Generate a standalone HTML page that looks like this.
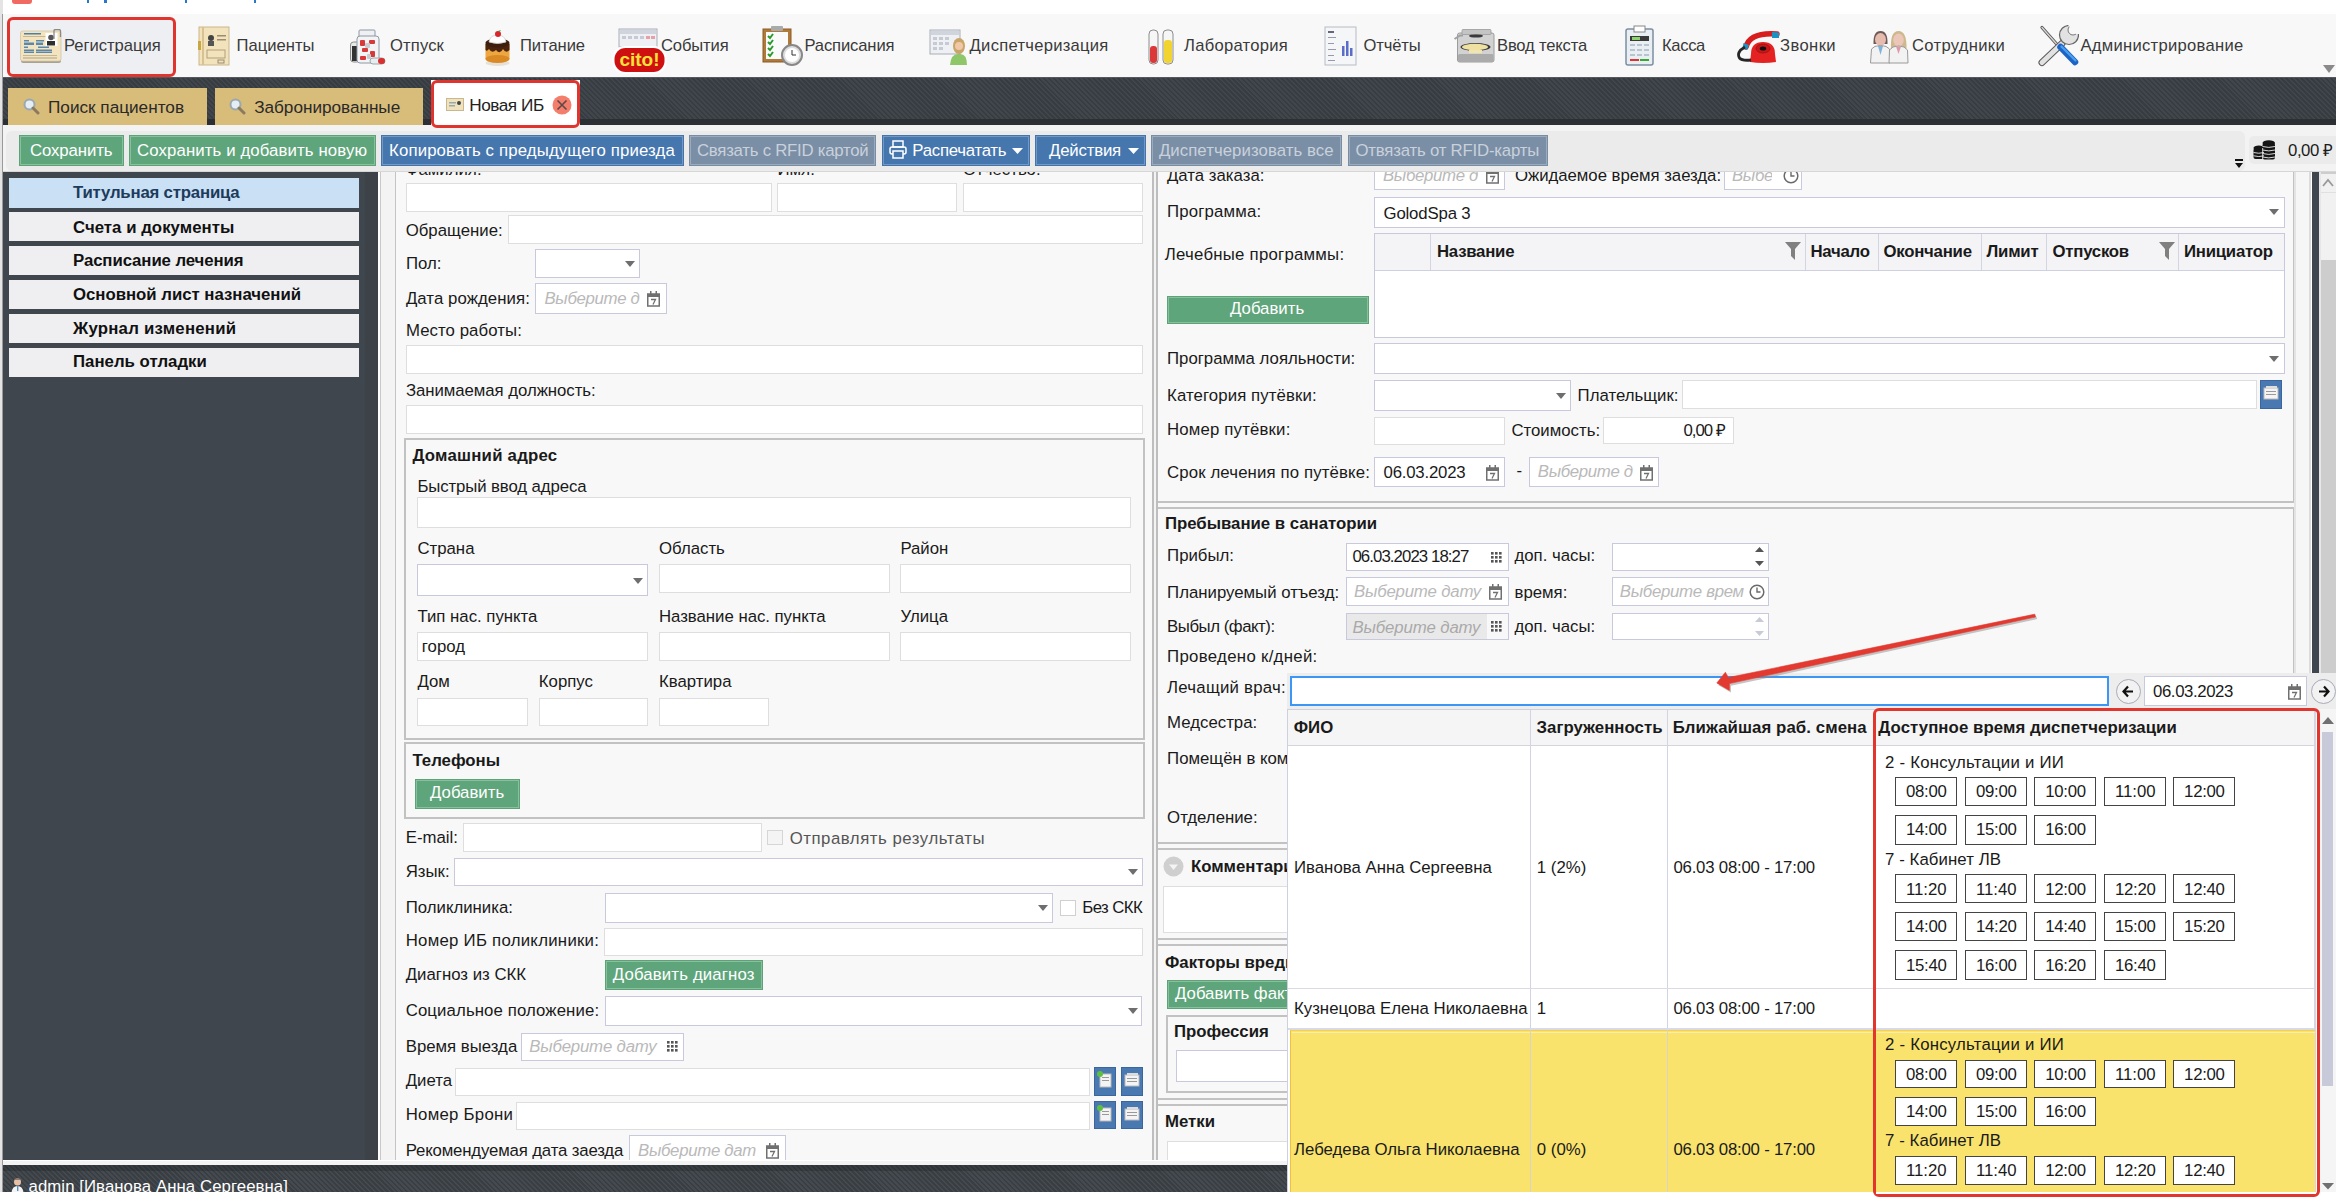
<!DOCTYPE html>
<html><head><meta charset="utf-8"><title>UI</title>
<style>
html,body{margin:0;padding:0;}
body{width:2336px;height:1197px;overflow:hidden;position:relative;background:#fff;font-family:"Liberation Sans", sans-serif;}
body div,body svg{position:absolute;box-sizing:border-box;}
.t{white-space:nowrap;}

.inp{background:#fff;border:1px solid #dedede;}
.dd{background:#fff;border:1px solid #c8c9dd;}
.dis{background:#e9e9e9;border:1px solid #c8c9dd;}
.gb{background:#5fa57b;border:1px solid #5ea27a;box-shadow:inset 0 0 0 1px #88c09c;}
.bb{background:#4676ae;border:1px solid #4474ab;box-shadow:inset 0 0 0 1px #7398c4;}
.xb{background:#7a8ea6;border:1px solid #788ca4;box-shadow:inset 0 0 0 1px #9aabbe;}
.dark{background:repeating-linear-gradient(45deg,#3f444a 0px,#3f444a 2.5px,#373b40 2.5px,#373b40 5px);}
.sec{border:2px solid #c2c2c2;}
.tbtn{background:#fff;border:1.2px solid #444;}
.arr{width:0;height:0;border-left:5px solid transparent;border-right:5px solid transparent;border-top:6px solid #707070;}

</style></head><body>
<div style="left:0px;top:0px;width:2336px;height:1197px;background:#f8f8f8;"></div>
<div style="left:0px;top:0px;width:3px;height:1197px;background:#e4e4e4;"></div>
<div style="left:2px;top:14px;width:1px;height:1178px;background:#9a9a9a;"></div>
<div style="left:3px;top:0px;width:2333px;height:14px;background:#ffffff;"></div>
<div style="left:12px;top:0px;width:20px;height:4px;background:#f16a62;border-radius:0 0 3px 3px;"></div>
<div style="left:87px;top:0px;width:1.5px;height:3px;background:#2a78c8;"></div>
<div style="left:104px;top:0px;width:2.5px;height:3px;background:#2a78c8;"></div>
<div style="left:185px;top:0px;width:1.5px;height:3px;background:#2a78c8;"></div>
<div style="left:254px;top:0px;width:2px;height:3px;background:#2a78c8;"></div>
<div style="left:3px;top:14px;width:2333px;height:63px;background:#f8f8f8;"></div>
<div style="left:7px;top:17px;width:169px;height:60px;background:#eeeff2;border:3px solid #e0352e;border-radius:6px;"></div>
<div class="t" style="left:64px;top:37.7px;font-size:16.6px;line-height:16.6px;color:#3a3a3a;letter-spacing:-0.029px;">Регистрация</div>
<div class="t" style="left:236.5px;top:37.7px;font-size:16.6px;line-height:16.6px;color:#3a3a3a;letter-spacing:0.018px;">Пациенты</div>
<div class="t" style="left:390px;top:37.7px;font-size:16.6px;line-height:16.6px;color:#3a3a3a;letter-spacing:0.138px;">Отпуск</div>
<div class="t" style="left:520px;top:37.7px;font-size:16.6px;line-height:16.6px;color:#3a3a3a;letter-spacing:-0.071px;">Питание</div>
<div class="t" style="left:661px;top:37.7px;font-size:16.6px;line-height:16.6px;color:#3a3a3a;letter-spacing:-0.143px;">События</div>
<div class="t" style="left:804.4px;top:37.7px;font-size:16.6px;line-height:16.6px;color:#3a3a3a;letter-spacing:-0.125px;">Расписания</div>
<div class="t" style="left:969.6px;top:37.7px;font-size:16.6px;line-height:16.6px;color:#3a3a3a;letter-spacing:0.264px;">Диспетчеризация</div>
<div class="t" style="left:1184px;top:37.7px;font-size:16.6px;line-height:16.6px;color:#3a3a3a;letter-spacing:0.266px;">Лаборатория</div>
<div class="t" style="left:1363.5px;top:37.7px;font-size:16.6px;line-height:16.6px;color:#3a3a3a;letter-spacing:-0.154px;">Отчёты</div>
<div class="t" style="left:1497px;top:37.7px;font-size:16.6px;line-height:16.6px;color:#3a3a3a;letter-spacing:-0.172px;">Ввод текста</div>
<div class="t" style="left:1662px;top:37.7px;font-size:16.6px;line-height:16.6px;color:#3a3a3a;letter-spacing:-0.344px;">Касса</div>
<div class="t" style="left:1780px;top:37.7px;font-size:16.6px;line-height:16.6px;color:#3a3a3a;letter-spacing:0.404px;">Звонки</div>
<div class="t" style="left:1912px;top:37.7px;font-size:16.6px;line-height:16.6px;color:#3a3a3a;letter-spacing:0.311px;">Сотрудники</div>
<div class="t" style="left:2080.5px;top:37.7px;font-size:16.6px;line-height:16.6px;color:#3a3a3a;letter-spacing:0.280px;">Администрирование</div>
<svg style="left:20px;top:29px" width="43" height="35" viewBox="0 0 43 35"><rect x="1" y="3" width="40" height="31" rx="2" fill="#a9a293"/><rect x="0.5" y="2" width="40.5" height="30" rx="2" fill="#f3e3bf" stroke="#d3c6a6" stroke-width="0.8"/><rect x="4" y="4" width="17" height="1.5" fill="#4a7fa8"/><rect x="3" y="7" width="27" height="1" fill="#c8b88e"/><g fill="#5a88ad"><rect x="4" y="11" width="5" height="1.5"/><rect x="16" y="11" width="8" height="1.5"/><rect x="4" y="13.5" width="10" height="2.5"/><rect x="16" y="13.5" width="7" height="2.5"/><rect x="4" y="17.5" width="4" height="1.5"/><rect x="18" y="17.5" width="11" height="1.5"/><rect x="4" y="20.5" width="10" height="1.5"/><rect x="16" y="20.5" width="16" height="1.5"/><rect x="4" y="22.5" width="10" height="1.5"/><rect x="16" y="22.5" width="16" height="1.5"/></g><rect x="3" y="26" width="34" height="1" fill="#c6b893"/><rect x="3" y="28" width="34" height="2" fill="#cfc3a4"/><rect x="25.5" y="4" width="12" height="13" fill="#ffffff"/><circle cx="31" cy="8.5" r="2.8" fill="#555"/><rect x="27" y="12" width="8" height="4.5" fill="#2e2e2e"/><path d="M34 10 L34 1.5 Q34 0.5 36 0.5 L39 0.5 Q40.5 0.5 40.5 2 L40.5 8" stroke="#8a8a8a" stroke-width="1.3" fill="none"/></svg>
<svg style="left:198px;top:26px" width="32" height="40" viewBox="0 0 32 40"><rect x="1" y="1" width="30" height="38" fill="#f2e3bd" stroke="#cbb58a"/><rect x="4" y="1" width="2" height="38" fill="#d9c291"/><circle cx="13" cy="12" r="3" fill="#444"/><rect x="10" y="15" width="6" height="5" fill="#555"/><rect x="19" y="9" width="9" height="1.5" fill="#9c8c70"/><rect x="19" y="13" width="9" height="1.5" fill="#9c8c70"/><rect x="9" y="24" width="18" height="8" fill="none" stroke="#b3a07a"/><rect x="20" y="34" width="6" height="3" fill="none" stroke="#9c8c70"/><rect x="0" y="15" width="3" height="9" fill="#c9a640"/></svg>
<svg style="left:349px;top:29px" width="37" height="37" viewBox="0 0 37 37"><rect x="1.5" y="13" width="9" height="20" rx="3" fill="#e8e8e8" stroke="#8a8a8a"/><rect x="3" y="17" width="5" height="15" fill="#333"/><rect x="10" y="1" width="16" height="7" rx="1" fill="#eef0f3" stroke="#8f98a4"/><rect x="8" y="7" width="22" height="27" rx="3" fill="#f2f4f6" stroke="#8f98a4"/><g fill="#d63a3a"><rect x="11" y="11" width="5" height="6" rx="1"/><rect x="20" y="11" width="6" height="4" rx="1"/><rect x="13" y="19" width="6" height="4" rx="1"/><rect x="21" y="22" width="5" height="6" rx="1"/><rect x="11" y="27" width="6" height="4" rx="1"/></g><g fill="#c8cdd2"><rect x="16" y="14" width="5" height="5" rx="1"/><rect x="18" y="25" width="4" height="5" rx="1"/></g><rect x="21" y="29" width="15" height="6" rx="3" fill="#e9ecef" stroke="#9aa"/><rect x="29" y="29" width="7" height="6" rx="3" fill="#d83030"/></svg>
<svg style="left:484px;top:30px" width="27" height="37" viewBox="0 0 27 37"><ellipse cx="13.5" cy="33" rx="12" ry="3" fill="#e0d6c8" opacity="0.7"/><rect x="1.5" y="14" width="24" height="15" fill="#eea640"/><ellipse cx="13.5" cy="29" rx="12" ry="4" fill="#d98a25"/><path d="M1.5 14 L25.5 14 L25.5 20 Q22 24 19 19 Q16 25 12 20 Q8 24 5 19 Q3 22 1.5 20Z" fill="#4a2410"/><ellipse cx="13.5" cy="13" rx="12" ry="4.5" fill="#3e1f0d"/><path d="M5 12 Q6 5 13.5 5 Q21 5 22 12 Q13.5 15 5 12Z" fill="#ffffff" stroke="#cfcfcf" stroke-width="0.8"/><circle cx="14" cy="4" r="3" fill="#d9262c"/><path d="M14 1 L17 0 L15.5 2Z" fill="#3a9a3a"/></svg>
<svg style="left:612px;top:28px" width="55" height="47" viewBox="0 0 55 47"><rect x="7" y="1" width="38" height="18" fill="#eef0f4" stroke="#a8adb5"/><rect x="8" y="2" width="36" height="4" fill="#d0d4dc"/><g fill="#c5cad4"><rect x="10" y="8" width="4" height="3"/><rect x="16" y="8" width="4" height="3"/><rect x="22" y="8" width="4" height="3"/><rect x="28" y="8" width="4" height="3"/></g><g fill="#e8a0a8"><rect x="34" y="8" width="4" height="3"/><rect x="39" y="8" width="4" height="3"/></g><rect x="0.5" y="18" width="54" height="28" rx="12" fill="#fff"/><rect x="2.5" y="20" width="50" height="24" rx="11" fill="#cf1010"/><text x="27.5" y="38" text-anchor="middle" font-family="Liberation Sans" font-weight="bold" font-size="19" fill="#ffe23a">cito!</text></svg>
<svg style="left:762px;top:25px" width="41" height="42" viewBox="0 0 41 42"><rect x="1" y="4" width="28" height="33" fill="#b07a3a" stroke="#8a5a24"/><rect x="4" y="7" width="22" height="27" fill="#fafafa"/><rect x="9" y="1" width="12" height="5" rx="1" fill="#aaa"/><g stroke="#2a9a2a" stroke-width="2" fill="none"><path d="M6 11 l2 2 l3 -4"/><path d="M6 17 l2 2 l3 -4"/><path d="M6 23 l2 2 l3 -4"/><path d="M6 29 l2 2 l3 -4"/></g><circle cx="30" cy="30" r="10" fill="#ddd" stroke="#888" stroke-width="2"/><circle cx="30" cy="30" r="7" fill="#fff"/><path d="M30 25 v5 h4" stroke="#333" fill="none"/></svg>
<svg style="left:929px;top:29px" width="39" height="37" viewBox="0 0 39 37"><rect x="1" y="1" width="30" height="24" fill="#eef0f4" stroke="#a8adb5"/><rect x="2" y="2" width="28" height="4" fill="#d0d4dc"/><g fill="#c5cad4"><rect x="4" y="8" width="4" height="3"/><rect x="10" y="8" width="4" height="3"/><rect x="16" y="8" width="4" height="3"/><rect x="4" y="13" width="4" height="3"/><rect x="10" y="13" width="4" height="3"/><rect x="16" y="13" width="4" height="3"/><rect x="4" y="18" width="4" height="3"/><rect x="10" y="18" width="4" height="3"/></g><ellipse cx="30" cy="17" rx="6" ry="8" fill="#c9a56a"/><circle cx="30" cy="17" r="4" fill="#f0c8a8"/><path d="M21 36 Q22 24 30 25 Q38 24 38 36Z" fill="#8fc66a"/></svg>
<svg style="left:1148px;top:29px" width="27" height="36" viewBox="0 0 27 36"><rect x="1" y="1" width="9" height="34" rx="4" fill="#f6f6f6" stroke="#8c8c8c"/><rect x="2" y="17" width="7" height="17" rx="3" fill="#dd3838"/><rect x="15" y="1" width="10" height="34" rx="4" fill="#f6f6f6" stroke="#8c8c8c"/><rect x="16" y="11" width="8" height="23" rx="3" fill="#f2d430"/></svg>
<svg style="left:1324px;top:26px" width="33" height="40" viewBox="0 0 33 40"><rect x="1" y="1" width="31" height="38" fill="#f4f6f8" stroke="#b6bcc4"/><rect x="4" y="5" width="6" height="2" fill="#667"/><g fill="#99a"><rect x="4" y="11" width="8" height="1"/><rect x="4" y="17" width="6" height="1"/><rect x="4" y="23" width="8" height="1"/><rect x="4" y="29" width="6" height="1"/><rect x="4" y="34" width="7" height="1"/></g><g fill="#5a6ec8"><rect x="18" y="20" width="2.5" height="10"/><rect x="22" y="15" width="2.5" height="15"/><rect x="26" y="22" width="2.5" height="8"/></g></svg>
<svg style="left:1454px;top:29px" width="41" height="34" viewBox="0 0 41 34"><rect x="3.5" y="4" width="36.5" height="29" rx="2" fill="#d2d2d2" stroke="#9c9c9c"/><rect x="4" y="25" width="35.5" height="8" rx="1.5" fill="#ababab"/><rect x="8" y="0.5" width="29" height="5" rx="1" fill="#c4c4c4" stroke="#9a9a9a" stroke-width="0.8"/><ellipse cx="22" cy="7" rx="7" ry="1.6" fill="#3a3a3a"/><path d="M0.5 10 L6 6.5 L9 6.5" stroke="#a0a0a0" stroke-width="2" fill="none"/><ellipse cx="21.5" cy="18" rx="15" ry="4" fill="#3c3c3c"/><ellipse cx="21" cy="18" rx="13" ry="3.2" fill="#efe1a2"/><rect x="15" y="21" width="13" height="3.2" fill="#f1e4ae"/></svg>
<svg style="left:1625px;top:25px" width="29" height="41" viewBox="0 0 29 41"><rect x="1" y="4" width="27" height="36" rx="2" fill="#e9eef3" stroke="#7b8ea2" stroke-width="1.5"/><rect x="9" y="1" width="11" height="6" fill="#fff" stroke="#888"/><rect x="5" y="11" width="19" height="5" fill="#3a3a3a"/><rect x="7" y="12" width="8" height="3" fill="#8bd46a"/><g fill="#b8c4d0"><rect x="5" y="19" width="5" height="2"/><rect x="12" y="19" width="5" height="2"/><rect x="19" y="19" width="5" height="2"/><rect x="5" y="24" width="5" height="2"/><rect x="12" y="24" width="5" height="2"/><rect x="19" y="24" width="5" height="2"/><rect x="5" y="29" width="5" height="2"/><rect x="12" y="29" width="5" height="2"/><rect x="19" y="29" width="5" height="2"/></g><rect x="5" y="34" width="9" height="2" fill="#d33"/><rect x="15" y="34" width="9" height="2" fill="#3a3"/></svg>
<svg style="left:1737px;top:29px" width="43" height="35" viewBox="0 0 43 35"><path d="M9 18 Q13 3 40 5" stroke="#d71d1d" stroke-width="5.5" fill="none" stroke-linecap="round"/><path d="M35 3 L42 3.5 L42 9 L35 9Z" fill="#1a93c4"/><path d="M6.5 14 L12 16 L10 21 L5.5 19Z" fill="#1a93c4"/><path d="M14 25 Q14 13 26 13 Q38 13 38 25 L39 33 Q26 35 13 33Z" fill="#e52222"/><ellipse cx="26" cy="19.5" rx="7" ry="4.5" fill="#c51818" stroke="#a01010" stroke-width="0.8"/><ellipse cx="26" cy="19.5" rx="3.2" ry="2" fill="#111"/><path d="M8 18 Q-1 23 2.5 29 Q5 32 14 31" stroke="#262626" stroke-width="2.8" fill="none"/></svg>
<svg style="left:1870px;top:30px" width="39" height="34" viewBox="0 0 39 34"><path d="M3.5 14 Q3 1 10.5 1 Q18 1 17.5 14 Z" fill="#6d5b58"/><ellipse cx="10.5" cy="9.5" rx="5.5" ry="6.5" fill="#e6bcae"/><path d="M0.5 33 L1.5 19 Q4 15.5 10.5 15.5 Q17 15.5 19.5 19 L20 33Z" fill="#f2f2f2" stroke="#9a9a9a"/><path d="M8 16 L10.5 25 L13 16Z" fill="#7fb2d6"/><path d="M21 19 Q20 1 28.5 1 Q37 1 36.5 19 Z" fill="#cdb98c"/><ellipse cx="28.5" cy="10" rx="5.3" ry="6.5" fill="#ecc6b8"/><path d="M19 33 L19.5 20 Q22 16 28.5 16 Q35 16 37.5 20 L38 33Z" fill="#f2f2f2" stroke="#9a9a9a"/><path d="M26 16.5 L28.5 24 L31 16.5Z" fill="#dc9aaa"/></svg>
<svg style="left:2037px;top:25px" width="42" height="42" viewBox="0 0 42 42"><path d="M5 2.5 L20.5 20" stroke="#555" stroke-width="3.2" stroke-linecap="round"/><path d="M5 2.5 L20.5 20" stroke="#d6d6d6" stroke-width="1.4" stroke-linecap="round"/><path d="M25 18.5 L5 37.5" stroke="#5a5a5a" stroke-width="7" stroke-linecap="round"/><path d="M25 18.5 L5 37.5" stroke="#e2e2e2" stroke-width="5" stroke-linecap="round"/><circle cx="32" cy="10" r="9.5" fill="#e2e2e2" stroke="#666" stroke-width="1.2"/><circle cx="36" cy="5" r="5" fill="#f8f8f8" stroke="#777" stroke-width="1"/><path d="M31 0 L43 0 L43 9 L39 9Z" fill="#f8f8f8"/><path d="M23.5 22 L38 37" stroke="#1d64c4" stroke-width="6.5" stroke-linecap="round"/><path d="M24.5 21.5 L38.5 35.5" stroke="#4aa0f0" stroke-width="2.2" stroke-linecap="round"/></svg>
<svg style="left:2322px;top:64px" width="14" height="10"><path d="M1 1 L13 1 L7 9Z" fill="#8a8a8a"/></svg>
<div style="left:3px;top:77px;width:2333px;height:48px;background:repeating-linear-gradient(45deg,#41464c 0px,#41464c 1.6px,#373c41 1.8px,#373c41 3.5px);"></div>
<div style="left:3px;top:77px;width:2333px;height:1px;background:#55595e;"></div>
<div style="left:3px;top:118.5px;width:2333px;height:6.5px;background:#2c3034;"></div>
<div style="left:8px;top:88px;width:199px;height:37px;background:#d8bc79;"></div>
<div style="left:215px;top:88px;width:208px;height:37px;background:#d8bc79;"></div>
<div style="left:431px;top:80px;width:149px;height:45px;background:#ffffff;"></div>
<svg style="left:23px;top:98px" width="17" height="17" viewBox="0 0 17 17"><circle cx="6.5" cy="6.5" r="5" fill="#e4eef4" stroke="#9aa8b0" stroke-width="2"/><path d="M10 10 L15 15" stroke="#8a7a60" stroke-width="3" stroke-linecap="round"/></svg>
<svg style="left:229px;top:98px" width="17" height="17" viewBox="0 0 17 17"><circle cx="6.5" cy="6.5" r="5" fill="#e4eef4" stroke="#9aa8b0" stroke-width="2"/><path d="M10 10 L15 15" stroke="#8a7a60" stroke-width="3" stroke-linecap="round"/></svg>
<div class="t" style="left:48px;top:98.97px;font-size:17.2px;line-height:17.2px;color:#2a2a2a;letter-spacing:-0.009px;">Поиск пациентов</div>
<div class="t" style="left:254.2px;top:98.77px;font-size:17.2px;line-height:17.2px;color:#2a2a2a;letter-spacing:-0.034px;">Забронированные</div>
<svg style="left:446px;top:98px" width="18" height="13" viewBox="0 0 18 13"><rect x="0.5" y="0.5" width="17" height="12" fill="#efe2bd" stroke="#c9b88e"/><rect x="3" y="4" width="7" height="1.5" fill="#9aa"/><rect x="3" y="7" width="6" height="1.5" fill="#9aa"/><circle cx="13" cy="5" r="2" fill="#444"/></svg>
<div class="t" style="left:469.2px;top:97.27px;font-size:17.2px;line-height:17.2px;color:#222;letter-spacing:-0.448px;">Новая ИБ</div>
<svg style="left:552px;top:95px" width="20" height="20" viewBox="0 0 20 20"><circle cx="10" cy="10" r="9.5" fill="#f47d6b"/><path d="M5.5 5.5 L14.5 14.5 M14.5 5.5 L5.5 14.5" stroke="#5a4a48" stroke-width="1.6"/></svg>
<div style="left:3px;top:125px;width:2333px;height:47px;background:#f3f3f3;"></div>
<div style="left:6px;top:131px;width:2239px;height:40px;background:#ebebeb;border-radius:6px;"></div>
<div style="left:3px;top:171px;width:2333px;height:1px;background:#d6d6d6;"></div>
<div class="gb" style="left:19px;top:135px;width:105px;height:31px;"></div>
<div class="t" style="left:30px;top:142.89px;font-size:16.8px;line-height:16.8px;color:#ffffff;letter-spacing:-0.099px;">Сохранить</div>
<div class="gb" style="left:129px;top:135px;width:247px;height:31px;"></div>
<div class="t" style="left:137.1px;top:142.89px;font-size:16.8px;line-height:16.8px;color:#ffffff;letter-spacing:0.105px;">Сохранить и добавить новую</div>
<div class="bb" style="left:381px;top:135px;width:303px;height:31px;"></div>
<div class="t" style="left:389px;top:142.89px;font-size:16.8px;line-height:16.8px;color:#ffffff;letter-spacing:0.144px;">Копировать с предыдущего приезда</div>
<div class="xb" style="left:689px;top:135px;width:187px;height:31px;"></div>
<div class="t" style="left:697px;top:142.89px;font-size:16.8px;line-height:16.8px;color:#c9d1db;letter-spacing:-0.251px;">Связать с RFID картой</div>
<div class="bb" style="left:882px;top:135px;width:148px;height:31px;"></div>
<div class="t" style="left:912.3px;top:142.89px;font-size:16.8px;line-height:16.8px;color:#ffffff;letter-spacing:-0.257px;">Распечатать</div>
<div class="bb" style="left:1035px;top:135px;width:111px;height:31px;"></div>
<div class="t" style="left:1049px;top:142.89px;font-size:16.8px;line-height:16.8px;color:#ffffff;letter-spacing:-0.191px;">Действия</div>
<div class="xb" style="left:1151px;top:135px;width:191px;height:31px;"></div>
<div class="t" style="left:1158.9px;top:142.89px;font-size:16.8px;line-height:16.8px;color:#c9d1db;letter-spacing:0.058px;">Диспетчеризовать все</div>
<div class="xb" style="left:1348px;top:135px;width:200px;height:31px;"></div>
<div class="t" style="left:1355.5px;top:142.89px;font-size:16.8px;line-height:16.8px;color:#c9d1db;letter-spacing:-0.210px;">Отвязать от RFID-карты</div>
<svg style="left:889px;top:140px" width="18" height="20" viewBox="0 0 18 20"><rect x="4" y="1" width="10" height="6" fill="none" stroke="#fff" stroke-width="1.5"/><rect x="1" y="7" width="16" height="7" rx="2" fill="none" stroke="#fff" stroke-width="1.5"/><rect x="4" y="11" width="10" height="7" fill="#4676ae" stroke="#fff" stroke-width="1.5"/></svg>
<svg style="left:1012px;top:148px" width="11" height="6"><path d="M0 0 L11 0 L5.5 6Z" fill="#fff"/></svg>
<svg style="left:1127.5px;top:148px" width="11" height="6"><path d="M0 0 L11 0 L5.5 6Z" fill="#fff"/></svg>
<svg style="left:2234px;top:159px" width="10" height="10"><rect x="1" y="0" width="8" height="2" fill="#111"/><path d="M1 4 L9 4 L5 9Z" fill="#111"/></svg>
<div style="left:2249px;top:136px;width:87px;height:28px;background:#ebebeb;border-radius:5px 0 0 5px;"></div>
<svg style="left:2253px;top:140px" width="23" height="21" viewBox="0 0 23 21"><g fill="#151515"><rect x="0.5" y="8" width="10.5" height="11" rx="2"/><ellipse cx="5.75" cy="8" rx="5.25" ry="2.6"/><rect x="9.5" y="3" width="12.5" height="16.5" rx="2"/><ellipse cx="15.75" cy="3" rx="6.25" ry="2.8"/></g><g stroke="#ebebeb" stroke-width="0.9" fill="none"><path d="M0.5 12.5 Q5.75 14 11 12.5 M0.5 15.8 Q5.75 17.3 11 15.8 M9.5 6.5 Q15.75 8.3 22 6.5 M9.5 10 Q15.75 11.8 22 10 M9.5 13.5 Q15.75 15.3 22 13.5 M9.5 17 Q15.75 18.8 22 17"/><path d="M9.7 8 V19"/></g></svg>
<div class="t" style="left:2288px;top:142.99px;font-size:16.8px;line-height:16.8px;color:#1a1a1a;letter-spacing:-0.438px;">0,00 ₽</div>
<div style="left:431px;top:80px;width:149px;height:48px;border:3px solid #e0352e;border-radius:6px;"></div>
<div style="left:3px;top:172px;width:375px;height:988px;background:#40464d;"></div>
<div style="left:365px;top:172px;width:13px;height:988px;background:#3d4248;"></div>
<div style="left:9px;top:178px;width:350px;height:30px;background:#c9e0f5;"></div>
<div class="t" style="left:73px;top:184.99px;font-size:16.8px;line-height:16.8px;color:#1d3b5a;font-weight:700;letter-spacing:-0.196px;">Титульная страница</div>
<div style="left:9px;top:212px;width:350px;height:29px;background:#efeff1;"></div>
<div class="t" style="left:73px;top:219.69px;font-size:16.8px;line-height:16.8px;color:#111111;font-weight:700;letter-spacing:0.030px;">Счета и документы</div>
<div style="left:9px;top:246px;width:350px;height:29px;background:#efeff1;"></div>
<div class="t" style="left:73px;top:253.09px;font-size:16.8px;line-height:16.8px;color:#111111;font-weight:700;letter-spacing:-0.089px;">Расписание лечения</div>
<div style="left:9px;top:280px;width:350px;height:29px;background:#efeff1;"></div>
<div class="t" style="left:73px;top:286.99px;font-size:16.8px;line-height:16.8px;color:#111111;font-weight:700;letter-spacing:-0.023px;">Основной лист назначений</div>
<div style="left:9px;top:313.5px;width:350px;height:29px;background:#efeff1;"></div>
<div class="t" style="left:73px;top:320.59px;font-size:16.8px;line-height:16.8px;color:#111111;font-weight:700;letter-spacing:0.235px;">Журнал изменений</div>
<div style="left:9px;top:347.5px;width:350px;height:29px;background:#efeff1;"></div>
<div class="t" style="left:73px;top:354.49px;font-size:16.8px;line-height:16.8px;color:#111111;font-weight:700;letter-spacing:0.007px;">Панель отладки</div>
<div style="left:378px;top:172px;width:778px;height:988px;background:#f8f8f8;"></div>
<div style="left:378px;top:172px;width:2px;height:988px;background:#ffffff;"></div>
<div style="left:380px;top:172px;width:1px;height:988px;background:#c8c8c8;"></div>
<div style="left:381px;top:172px;width:14px;height:988px;background:#f3f3f3;"></div>
<div style="left:395px;top:172px;width:1px;height:988px;background:#c4c4c4;"></div>
<div style="left:1152px;top:172px;width:2px;height:988px;background:#bdbdbd;"></div>
<div style="left:1154px;top:172px;width:2px;height:988px;background:#f3f3f3;"></div>
<div style="left:1156px;top:172px;width:2px;height:988px;background:#bdbdbd;"></div>
<div style="left:0;top:0;width:2336px;height:1197px;clip-path:inset(172px 1184px 37px 396px);">
<div class="t" style="left:405.7px;top:161.99px;font-size:16.8px;line-height:16.8px;color:#1a1a1a;">Фамилия:</div>
<div class="t" style="left:777.5px;top:161.99px;font-size:16.8px;line-height:16.8px;color:#1a1a1a;">Имя:</div>
<div class="t" style="left:963px;top:161.99px;font-size:16.8px;line-height:16.8px;color:#1a1a1a;">Отчество:</div>
<div class="inp" style="left:406px;top:183px;width:366px;height:29px;"></div>
<div class="inp" style="left:777px;top:183px;width:180px;height:29px;"></div>
<div class="inp" style="left:963px;top:183px;width:180px;height:29px;"></div>
<div class="t" style="left:405.7px;top:222.79px;font-size:16.8px;line-height:16.8px;color:#1a1a1a;letter-spacing:0.008px;">Обращение:</div>
<div class="inp" style="left:508px;top:215px;width:635px;height:29px;"></div>
<div class="t" style="left:405.9px;top:255.89px;font-size:16.8px;line-height:16.8px;color:#1a1a1a;">Пол:</div>
<div class="dd" style="left:535px;top:249px;width:105px;height:29px;"></div>
<svg style="left:625px;top:261px" width="10" height="6"><path d="M0 0 L10 0 L5 6Z" fill="#6e6e6e"/></svg>
<div class="t" style="left:405.9px;top:290.99px;font-size:16.8px;line-height:16.8px;color:#1a1a1a;letter-spacing:0.068px;">Дата рождения:</div>
<div class="dd" style="left:535px;top:283px;width:132px;height:31px;"></div>
<div class="t" style="left:544.5px;top:291.49px;font-size:16.8px;line-height:16.8px;color:#b9b9b9;font-style:italic;letter-spacing:-0.323px;">Выберите д</div>
<svg style="left:647px;top:291px" width="13" height="16" viewBox="0 0 13 16"><rect x="0.75" y="3" width="11.5" height="12" fill="none" stroke="#707070" stroke-width="1.5"/><rect x="0.75" y="3" width="11.5" height="3" fill="#707070"/><rect x="3" y="0" width="1.5" height="4" fill="#707070"/><rect x="8.5" y="0" width="1.5" height="4" fill="#707070"/><path d="M4 8.5 H8.5 L6 13.5" stroke="#707070" stroke-width="1.3" fill="none"/></svg>
<div class="t" style="left:405.9px;top:322.69px;font-size:16.8px;line-height:16.8px;color:#1a1a1a;letter-spacing:0.073px;">Место работы:</div>
<div class="inp" style="left:406px;top:345px;width:737px;height:29px;"></div>
<div class="t" style="left:405.9px;top:382.79px;font-size:16.8px;line-height:16.8px;color:#1a1a1a;letter-spacing:-0.052px;">Занимаемая должность:</div>
<div class="inp" style="left:406px;top:405px;width:737px;height:29px;"></div>
<div class="sec" style="left:404px;top:438px;width:741px;height:302px;"></div>
<div class="t" style="left:412.4px;top:447.99px;font-size:16.8px;line-height:16.8px;color:#1a1a1a;font-weight:700;letter-spacing:0.227px;">Домашний адрес</div>
<div class="t" style="left:417.4px;top:478.69px;font-size:16.8px;line-height:16.8px;color:#1a1a1a;letter-spacing:-0.113px;">Быстрый ввод адреса</div>
<div class="inp" style="left:417px;top:497px;width:714px;height:31px;"></div>
<div class="t" style="left:417.4px;top:540.99px;font-size:16.8px;line-height:16.8px;color:#1a1a1a;">Страна</div>
<div class="t" style="left:659px;top:540.99px;font-size:16.8px;line-height:16.8px;color:#1a1a1a;">Область</div>
<div class="t" style="left:900.4px;top:540.99px;font-size:16.8px;line-height:16.8px;color:#1a1a1a;">Район</div>
<div class="dd" style="left:417px;top:564px;width:231px;height:32px;"></div>
<svg style="left:633px;top:577.5px" width="10" height="6"><path d="M0 0 L10 0 L5 6Z" fill="#6e6e6e"/></svg>
<div class="inp" style="left:659px;top:564px;width:231px;height:29px;"></div>
<div class="inp" style="left:900px;top:564px;width:231px;height:29px;"></div>
<div class="t" style="left:417.4px;top:608.79px;font-size:16.8px;line-height:16.8px;color:#1a1a1a;">Тип нас. пункта</div>
<div class="t" style="left:659px;top:608.79px;font-size:16.8px;line-height:16.8px;color:#1a1a1a;letter-spacing:-0.029px;">Название нас. пункта</div>
<div class="t" style="left:900.4px;top:608.79px;font-size:16.8px;line-height:16.8px;color:#1a1a1a;">Улица</div>
<div class="inp" style="left:417px;top:632px;width:231px;height:29px;"></div>
<div class="inp" style="left:659px;top:632px;width:231px;height:29px;"></div>
<div class="inp" style="left:900px;top:632px;width:231px;height:29px;"></div>
<div class="t" style="left:421.8px;top:638.99px;font-size:16.8px;line-height:16.8px;color:#1a1a1a;">город</div>
<div class="t" style="left:417.4px;top:673.99px;font-size:16.8px;line-height:16.8px;color:#1a1a1a;">Дом</div>
<div class="t" style="left:538.8px;top:673.99px;font-size:16.8px;line-height:16.8px;color:#1a1a1a;">Корпус</div>
<div class="t" style="left:659px;top:673.99px;font-size:16.8px;line-height:16.8px;color:#1a1a1a;">Квартира</div>
<div class="inp" style="left:417px;top:698px;width:111px;height:28px;"></div>
<div class="inp" style="left:538.5px;top:698px;width:109.5px;height:28px;"></div>
<div class="inp" style="left:659px;top:698px;width:110px;height:28px;"></div>
<div class="sec" style="left:404px;top:742px;width:741px;height:77px;"></div>
<div class="t" style="left:412.4px;top:753.39px;font-size:16.8px;line-height:16.8px;color:#1a1a1a;font-weight:700;">Телефоны</div>
<div class="gb" style="left:415px;top:779px;width:105px;height:30px;"></div>
<div class="t" style="left:430px;top:785.49px;font-size:16.8px;line-height:16.8px;color:#fff;">Добавить</div>
<div class="t" style="left:405.7px;top:830.29px;font-size:16.8px;line-height:16.8px;color:#1a1a1a;">E-mail:</div>
<div class="inp" style="left:462.5px;top:823px;width:299.5px;height:29px;"></div>
<div style="left:767px;top:830px;width:16px;height:15px;background:#f4f4f4;border:1px solid #d6d6d6;"></div>
<div class="t" style="left:789.7px;top:830.99px;font-size:16.8px;line-height:16.8px;color:#555555;letter-spacing:0.526px;">Отправлять результаты</div>
<div class="t" style="left:405.7px;top:863.59px;font-size:16.8px;line-height:16.8px;color:#1a1a1a;">Язык:</div>
<div class="dd" style="left:453.5px;top:858px;width:689.0px;height:27.5px;"></div>
<svg style="left:1127.5px;top:869px" width="10" height="6"><path d="M0 0 L10 0 L5 6Z" fill="#6e6e6e"/></svg>
<div class="t" style="left:405.7px;top:899.99px;font-size:16.8px;line-height:16.8px;color:#1a1a1a;">Поликлиника:</div>
<div class="dd" style="left:605.4px;top:893px;width:447.6px;height:30px;"></div>
<svg style="left:1037.8px;top:905px" width="10" height="6"><path d="M0 0 L10 0 L5 6Z" fill="#6e6e6e"/></svg>
<div style="left:1059.5px;top:899.5px;width:16px;height:16.5px;background:#fff;border:1px solid #d0d0d0;"></div>
<div class="t" style="left:1082.2px;top:899.99px;font-size:16.8px;line-height:16.8px;color:#1a1a1a;letter-spacing:-0.574px;">Без СКК</div>
<div class="t" style="left:405.7px;top:933.39px;font-size:16.8px;line-height:16.8px;color:#1a1a1a;letter-spacing:0.262px;">Номер ИБ поликлиники:</div>
<div class="inp" style="left:603.7px;top:927.5px;width:539.3px;height:28.0px;"></div>
<div class="t" style="left:405.7px;top:966.79px;font-size:16.8px;line-height:16.8px;color:#1a1a1a;">Диагноз из СКК</div>
<div class="gb" style="left:605.4px;top:960.3px;width:157.6px;height:29.5px;"></div>
<div class="t" style="left:612.7px;top:967.29px;font-size:16.8px;line-height:16.8px;color:#fff;letter-spacing:0.152px;">Добавить диагноз</div>
<div class="t" style="left:405.7px;top:1003.49px;font-size:16.8px;line-height:16.8px;color:#1a1a1a;letter-spacing:0.106px;">Социальное положение:</div>
<div class="dd" style="left:605.4px;top:996.3px;width:537.1px;height:30.200000000000045px;"></div>
<svg style="left:1127.5px;top:1008px" width="10" height="6"><path d="M0 0 L10 0 L5 6Z" fill="#6e6e6e"/></svg>
<div class="t" style="left:405.7px;top:1038.99px;font-size:16.8px;line-height:16.8px;color:#1a1a1a;">Время выезда</div>
<div class="dd" style="left:521.2px;top:1033px;width:163.29999999999995px;height:27.5px;"></div>
<div class="t" style="left:529.2px;top:1039.49px;font-size:16.8px;line-height:16.8px;color:#b9b9b9;font-style:italic;letter-spacing:-0.175px;">Выберите дату</div>
<svg style="left:666.5px;top:1041px" width="11" height="11" viewBox="0 0 11 11"><rect x="0" y="0" width="2.6" height="2.6" fill="#555"/><rect x="0" y="4" width="2.6" height="2.6" fill="#555"/><rect x="0" y="8" width="2.6" height="2.6" fill="#555"/><rect x="4" y="0" width="2.6" height="2.6" fill="#555"/><rect x="4" y="4" width="2.6" height="2.6" fill="#555"/><rect x="4" y="8" width="2.6" height="2.6" fill="#555"/><rect x="8" y="0" width="2.6" height="2.6" fill="#555"/><rect x="8" y="4" width="2.6" height="2.6" fill="#555"/><rect x="8" y="8" width="2.6" height="2.6" fill="#555"/></svg>
<div class="t" style="left:405.7px;top:1072.99px;font-size:16.8px;line-height:16.8px;color:#1a1a1a;">Диета</div>
<div class="inp" style="left:455px;top:1068px;width:635px;height:27.5px;"></div>
<div class="t" style="left:405.7px;top:1107.49px;font-size:16.8px;line-height:16.8px;color:#1a1a1a;letter-spacing:0.260px;">Номер Брони</div>
<div class="inp" style="left:516px;top:1101.5px;width:574px;height:28.0px;"></div>
<div style="left:1094px;top:1067px;width:21.59999999999991px;height:28.5px;background:#4a78b0;border:1px solid #3a66a0;"></div>
<svg style="left:1094px;top:1067px" width="21.59999999999991" height="28.5" viewBox="0 0 21.59999999999991 28.5"><rect x="6" y="7" width="11" height="13" fill="#f4f4f4" stroke="#bbb"/><rect x="8" y="10" width="7" height="1" fill="#999"/><rect x="8" y="13" width="7" height="1" fill="#999"/><circle cx="6" cy="7" r="3" fill="#5fc040"/></svg>
<div style="left:1121.2px;top:1067px;width:21.799999999999955px;height:28.5px;background:#4a78b0;border:1px solid #3a66a0;"></div>
<svg style="left:1121.2px;top:1067px" width="21.799999999999955" height="28.5" viewBox="0 0 21.799999999999955 28.5"><rect x="4" y="8" width="14" height="11" fill="#f4f4f4" stroke="#bbb"/><rect x="6" y="11" width="10" height="1" fill="#999"/><rect x="6" y="14" width="10" height="1" fill="#999"/><rect x="6" y="6" width="11" height="2" fill="#ddd"/></svg>
<div style="left:1094px;top:1101.2px;width:21.59999999999991px;height:28.299999999999955px;background:#4a78b0;border:1px solid #3a66a0;"></div>
<svg style="left:1094px;top:1101.2px" width="21.59999999999991" height="28.299999999999955" viewBox="0 0 21.59999999999991 28.299999999999955"><rect x="6" y="7" width="11" height="13" fill="#f4f4f4" stroke="#bbb"/><rect x="8" y="10" width="7" height="1" fill="#999"/><rect x="8" y="13" width="7" height="1" fill="#999"/><circle cx="6" cy="7" r="3" fill="#5fc040"/></svg>
<div style="left:1121.2px;top:1101.2px;width:21.799999999999955px;height:28.299999999999955px;background:#4a78b0;border:1px solid #3a66a0;"></div>
<svg style="left:1121.2px;top:1101.2px" width="21.799999999999955" height="28.299999999999955" viewBox="0 0 21.799999999999955 28.299999999999955"><rect x="4" y="8" width="14" height="11" fill="#f4f4f4" stroke="#bbb"/><rect x="6" y="11" width="10" height="1" fill="#999"/><rect x="6" y="14" width="10" height="1" fill="#999"/><rect x="6" y="6" width="11" height="2" fill="#ddd"/></svg>
<div class="t" style="left:405.7px;top:1143.09px;font-size:16.8px;line-height:16.8px;color:#1a1a1a;letter-spacing:-0.158px;">Рекомендуемая дата заезда</div>
<div class="dd" style="left:629.4px;top:1135px;width:156.89999999999998px;height:30px;"></div>
<div class="t" style="left:638px;top:1143.49px;font-size:16.8px;line-height:16.8px;color:#b9b9b9;font-style:italic;letter-spacing:-0.296px;">Выберите дат</div>
<svg style="left:766px;top:1143px" width="13" height="16" viewBox="0 0 13 16"><rect x="0.75" y="3" width="11.5" height="12" fill="none" stroke="#707070" stroke-width="1.5"/><rect x="0.75" y="3" width="11.5" height="3" fill="#707070"/><rect x="3" y="0" width="1.5" height="4" fill="#707070"/><rect x="8.5" y="0" width="1.5" height="4" fill="#707070"/><path d="M4 8.5 H8.5 L6 13.5" stroke="#707070" stroke-width="1.3" fill="none"/></svg>
</div>
<div style="left:1158px;top:172px;width:1136px;height:988px;background:#f8f8f8;"></div>
<div style="left:2294px;top:172px;width:1.5px;height:988px;background:#e4e4e4;"></div>
<div style="left:2295.5px;top:172px;width:14px;height:988px;background:#f6f6f6;"></div>
<div style="left:2309px;top:172px;width:1.5px;height:988px;background:#dcdcdc;"></div>
<div style="left:2310.5px;top:172px;width:1.5px;height:988px;background:#ffffff;"></div>
<div style="left:2312px;top:172px;width:7px;height:988px;background:#40464d;"></div>
<div style="left:2319px;top:172px;width:17px;height:988px;background:#cdcdcd;"></div>
<div style="left:2319px;top:172px;width:1.5px;height:988px;background:#e6e6e6;"></div>
<div style="left:2320.5px;top:174px;width:15.5px;height:86px;background:#f1f1f1;"></div>
<div style="left:2320.5px;top:192px;width:15.5px;height:1px;background:#e0e0e0;"></div>
<svg style="left:2322px;top:178px" width="12" height="10"><path d="M1 8 L6 2 L11 8" stroke="#9a9a9a" stroke-width="1.8" fill="none"/></svg>
<div style="left:0;top:0;width:2336px;height:1197px;clip-path:inset(172px 42px 37px 1158px);">
<div class="sec" style="left:1156px;top:150px;width:1139px;height:353px;"></div>
<div class="t" style="left:1167px;top:168.49px;font-size:16.8px;line-height:16.8px;color:#1a1a1a;">Дата заказа:</div>
<div class="dd" style="left:1374.4px;top:160px;width:130.5999999999999px;height:30px;"></div>
<div class="t" style="left:1383px;top:167.99px;font-size:16.8px;line-height:16.8px;color:#b9b9b9;font-style:italic;letter-spacing:-0.323px;">Выберите д</div>
<svg style="left:1486px;top:168px" width="13" height="16" viewBox="0 0 13 16"><rect x="0.75" y="3" width="11.5" height="12" fill="none" stroke="#707070" stroke-width="1.5"/><rect x="0.75" y="3" width="11.5" height="3" fill="#707070"/><rect x="3" y="0" width="1.5" height="4" fill="#707070"/><rect x="8.5" y="0" width="1.5" height="4" fill="#707070"/><path d="M4 8.5 H8.5 L6 13.5" stroke="#707070" stroke-width="1.3" fill="none"/></svg>
<div class="t" style="left:1515px;top:168.49px;font-size:16.8px;line-height:16.8px;color:#1a1a1a;letter-spacing:-0.041px;">Ожидаемое время заезда:</div>
<div class="dd" style="left:1724.4px;top:160px;width:78.09999999999991px;height:30px;"></div>
<div class="t" style="left:1732px;top:167.99px;font-size:16.8px;line-height:16.8px;color:#b9b9b9;font-style:italic;letter-spacing:-0.331px;">Выбер</div>
<div style="left:1772px;top:165px;width:20px;height:22px;background:#fff;"></div>
<svg style="left:1782.5px;top:168px" width="16" height="16" viewBox="0 0 16 16"><circle cx="8" cy="8" r="6.8" fill="none" stroke="#6a6a6a" stroke-width="1.5"/><path d="M8 3.5 V8 H11.5" stroke="#6a6a6a" stroke-width="1.4" fill="none"/></svg>
<div class="t" style="left:1167px;top:204.29px;font-size:16.8px;line-height:16.8px;color:#1a1a1a;letter-spacing:0.171px;">Программа:</div>
<div class="dd" style="left:1374.4px;top:197px;width:910.5999999999999px;height:31px;"></div>
<svg style="left:2269px;top:209px" width="10" height="6"><path d="M0 0 L10 0 L5 6Z" fill="#6e6e6e"/></svg>
<div class="t" style="left:1383.5px;top:205.99px;font-size:16.8px;line-height:16.8px;color:#1a1a1a;letter-spacing:-0.164px;">GolodSpa 3</div>
<div class="t" style="left:1164.8px;top:246.99px;font-size:16.8px;line-height:16.8px;color:#1a1a1a;letter-spacing:0.239px;">Лечебные программы:</div>
<div style="left:1374.4px;top:233.3px;width:910.6px;height:104.5px;background:#fff;border:1px solid #c8c9dd;"></div>
<div style="left:1375.4px;top:234.3px;width:908.6px;height:37px;background:#f4f4f6;border-bottom:1px solid #d0d1e0;"></div>
<div style="left:1430.4px;top:234.3px;width:1px;height:36px;background:#d4d5e2;"></div>
<div style="left:1804.5px;top:234.3px;width:1px;height:36px;background:#d4d5e2;"></div>
<div style="left:1877.5px;top:234.3px;width:1px;height:36px;background:#d4d5e2;"></div>
<div style="left:1980.6px;top:234.3px;width:1px;height:36px;background:#d4d5e2;"></div>
<div style="left:2046.3px;top:234.3px;width:1px;height:36px;background:#d4d5e2;"></div>
<div style="left:2177.5px;top:234.3px;width:1px;height:36px;background:#d4d5e2;"></div>
<div class="t" style="left:1437px;top:244.19px;font-size:16.8px;line-height:16.8px;color:#1a1a1a;font-weight:700;letter-spacing:-0.25px;">Название</div>
<div class="t" style="left:1810.5px;top:244.19px;font-size:16.8px;line-height:16.8px;color:#1a1a1a;font-weight:700;letter-spacing:-0.25px;">Начало</div>
<div class="t" style="left:1883.5px;top:244.19px;font-size:16.8px;line-height:16.8px;color:#1a1a1a;font-weight:700;letter-spacing:-0.25px;">Окончание</div>
<div class="t" style="left:1986.6px;top:244.19px;font-size:16.8px;line-height:16.8px;color:#1a1a1a;font-weight:700;letter-spacing:-0.25px;">Лимит</div>
<div class="t" style="left:2052.5px;top:244.19px;font-size:16.8px;line-height:16.8px;color:#1a1a1a;font-weight:700;letter-spacing:-0.25px;">Отпусков</div>
<div class="t" style="left:2184px;top:244.19px;font-size:16.8px;line-height:16.8px;color:#1a1a1a;font-weight:700;letter-spacing:-0.25px;">Инициатор</div>
<svg style="left:1785px;top:242.4px" width="16" height="19" viewBox="0 0 16 19"><path d="M0 0 H16 L10 7 V18 L6 14 V7 Z" fill="#808080"/></svg>
<svg style="left:2159px;top:242.4px" width="16" height="19" viewBox="0 0 16 19"><path d="M0 0 H16 L10 7 V18 L6 14 V7 Z" fill="#808080"/></svg>
<div class="gb" style="left:1167px;top:295.5px;width:201.75px;height:28.5px;"></div>
<div class="t" style="left:1230px;top:301.49px;font-size:16.8px;line-height:16.8px;color:#fff;">Добавить</div>
<div class="t" style="left:1167px;top:350.99px;font-size:16.8px;line-height:16.8px;color:#1a1a1a;">Программа лояльности:</div>
<div class="dd" style="left:1374.4px;top:343.2px;width:910.5999999999999px;height:31.30000000000001px;"></div>
<svg style="left:2269px;top:356px" width="10" height="6"><path d="M0 0 L10 0 L5 6Z" fill="#6e6e6e"/></svg>
<div class="t" style="left:1167px;top:387.99px;font-size:16.8px;line-height:16.8px;color:#1a1a1a;letter-spacing:0.100px;">Категория путёвки:</div>
<div class="dd" style="left:1374.4px;top:380.2px;width:196.89999999999986px;height:31.19999999999999px;"></div>
<svg style="left:1555.5px;top:393px" width="10" height="6"><path d="M0 0 L10 0 L5 6Z" fill="#6e6e6e"/></svg>
<div class="t" style="left:1577.6px;top:387.99px;font-size:16.8px;line-height:16.8px;color:#1a1a1a;">Плательщик:</div>
<div class="inp" style="left:1682px;top:380.2px;width:574.5px;height:28.400000000000034px;"></div>
<div style="left:2260px;top:380.2px;width:21.800000000000182px;height:28.400000000000034px;background:#4a78b0;border:1px solid #3a66a0;"></div>
<svg style="left:2260px;top:380.2px" width="21.800000000000182" height="28.400000000000034" viewBox="0 0 21.800000000000182 28.400000000000034"><rect x="4" y="8" width="14" height="11" fill="#f4f4f4" stroke="#bbb"/><rect x="6" y="11" width="10" height="1" fill="#999"/><rect x="6" y="14" width="10" height="1" fill="#999"/><rect x="6" y="6" width="11" height="2" fill="#ddd"/></svg>
<div class="t" style="left:1167px;top:421.99px;font-size:16.8px;line-height:16.8px;color:#1a1a1a;letter-spacing:0.171px;">Номер путёвки:</div>
<div class="inp" style="left:1374.4px;top:417.1px;width:130.5999999999999px;height:27.899999999999977px;"></div>
<div class="t" style="left:1511.4px;top:423.39px;font-size:16.8px;line-height:16.8px;color:#1a1a1a;">Стоимость:</div>
<div class="inp" style="left:1603px;top:416.5px;width:131.4000000000001px;height:27.5px;"></div>
<div class="t" style="left:1683.5px;top:423.49px;font-size:16.8px;line-height:16.8px;color:#1a1a1a;letter-spacing:-1.055px;">0,00 ₽</div>
<div class="t" style="left:1167px;top:464.59px;font-size:16.8px;line-height:16.8px;color:#1a1a1a;letter-spacing:0.132px;">Срок лечения по путёвке:</div>
<div class="dd" style="left:1374.4px;top:457.4px;width:130.5999999999999px;height:29.30000000000001px;"></div>
<div class="t" style="left:1383.5px;top:464.99px;font-size:16.8px;line-height:16.8px;color:#1a1a1a;letter-spacing:-0.200px;">06.03.2023</div>
<svg style="left:1486px;top:464.5px" width="13" height="16" viewBox="0 0 13 16"><rect x="0.75" y="3" width="11.5" height="12" fill="none" stroke="#707070" stroke-width="1.5"/><rect x="0.75" y="3" width="11.5" height="3" fill="#707070"/><rect x="3" y="0" width="1.5" height="4" fill="#707070"/><rect x="8.5" y="0" width="1.5" height="4" fill="#707070"/><path d="M4 8.5 H8.5 L6 13.5" stroke="#707070" stroke-width="1.3" fill="none"/></svg>
<div class="t" style="left:1516.5px;top:462.99px;font-size:16.8px;line-height:16.8px;color:#1a1a1a;">-</div>
<div class="dd" style="left:1528.7px;top:457.4px;width:130.70000000000005px;height:29.30000000000001px;"></div>
<div class="t" style="left:1537.8px;top:464.49px;font-size:16.8px;line-height:16.8px;color:#b9b9b9;font-style:italic;letter-spacing:-0.323px;">Выберите д</div>
<svg style="left:1640px;top:464.5px" width="13" height="16" viewBox="0 0 13 16"><rect x="0.75" y="3" width="11.5" height="12" fill="none" stroke="#707070" stroke-width="1.5"/><rect x="0.75" y="3" width="11.5" height="3" fill="#707070"/><rect x="3" y="0" width="1.5" height="4" fill="#707070"/><rect x="8.5" y="0" width="1.5" height="4" fill="#707070"/><path d="M4 8.5 H8.5 L6 13.5" stroke="#707070" stroke-width="1.3" fill="none"/></svg>
<div class="sec" style="left:1156px;top:506.5px;width:1139px;height:337px;"></div>
<div class="t" style="left:1165px;top:516.19px;font-size:16.8px;line-height:16.8px;color:#1a1a1a;font-weight:700;letter-spacing:-0.021px;">Пребывание в санатории</div>
<div class="t" style="left:1167.1px;top:547.79px;font-size:16.8px;line-height:16.8px;color:#1a1a1a;">Прибыл:</div>
<div class="dd" style="left:1345.5px;top:542.6px;width:163.0px;height:28.0px;"></div>
<div class="t" style="left:1352.4px;top:548.99px;font-size:16.8px;line-height:16.8px;color:#1a1a1a;letter-spacing:-0.916px;">06.03.2023 18:27</div>
<svg style="left:1490.5px;top:551.5px" width="11" height="11" viewBox="0 0 11 11"><rect x="0" y="0" width="2.6" height="2.6" fill="#555"/><rect x="0" y="4" width="2.6" height="2.6" fill="#555"/><rect x="0" y="8" width="2.6" height="2.6" fill="#555"/><rect x="4" y="0" width="2.6" height="2.6" fill="#555"/><rect x="4" y="4" width="2.6" height="2.6" fill="#555"/><rect x="4" y="8" width="2.6" height="2.6" fill="#555"/><rect x="8" y="0" width="2.6" height="2.6" fill="#555"/><rect x="8" y="4" width="2.6" height="2.6" fill="#555"/><rect x="8" y="8" width="2.6" height="2.6" fill="#555"/></svg>
<div class="t" style="left:1514.5px;top:547.79px;font-size:16.8px;line-height:16.8px;color:#1a1a1a;">доп. часы:</div>
<div class="dd" style="left:1612.3px;top:542.6px;width:157.20000000000005px;height:28.0px;"></div>
<svg style="left:1754px;top:546px" width="11" height="21"><path d="M1 6 L5.5 1 L10 6Z M1 15 L10 15 L5.5 20Z" fill="#555"/></svg>
<div class="t" style="left:1167.1px;top:584.79px;font-size:16.8px;line-height:16.8px;color:#1a1a1a;letter-spacing:-0.002px;">Планируемый отъезд:</div>
<div class="dd" style="left:1345.5px;top:576.6px;width:163.0px;height:29.799999999999955px;"></div>
<div class="t" style="left:1354px;top:584.49px;font-size:16.8px;line-height:16.8px;color:#b9b9b9;font-style:italic;letter-spacing:-0.198px;">Выберите дату</div>
<svg style="left:1489px;top:583.5px" width="13" height="16" viewBox="0 0 13 16"><rect x="0.75" y="3" width="11.5" height="12" fill="none" stroke="#707070" stroke-width="1.5"/><rect x="0.75" y="3" width="11.5" height="3" fill="#707070"/><rect x="3" y="0" width="1.5" height="4" fill="#707070"/><rect x="8.5" y="0" width="1.5" height="4" fill="#707070"/><path d="M4 8.5 H8.5 L6 13.5" stroke="#707070" stroke-width="1.3" fill="none"/></svg>
<div class="t" style="left:1514.5px;top:584.79px;font-size:16.8px;line-height:16.8px;color:#1a1a1a;">время:</div>
<div class="dd" style="left:1612.3px;top:576.6px;width:157.20000000000005px;height:29.799999999999955px;"></div>
<div class="t" style="left:1619.8px;top:584.49px;font-size:16.8px;line-height:16.8px;color:#b9b9b9;font-style:italic;letter-spacing:-0.285px;">Выберите врем</div>
<div style="left:1745px;top:580px;width:22px;height:24px;background:#fff;"></div>
<svg style="left:1748.5px;top:583.6px" width="16" height="16" viewBox="0 0 16 16"><circle cx="8" cy="8" r="6.8" fill="none" stroke="#6a6a6a" stroke-width="1.5"/><path d="M8 3.5 V8 H11.5" stroke="#6a6a6a" stroke-width="1.4" fill="none"/></svg>
<div class="t" style="left:1167.1px;top:619.19px;font-size:16.8px;line-height:16.8px;color:#1a1a1a;letter-spacing:-0.468px;">Выбыл (факт):</div>
<div class="dis" style="left:1345.5px;top:612.7px;width:163.0px;height:27.699999999999932px;"></div>
<div style="left:1486.5px;top:613.7px;width:21px;height:25.7px;background:#f8f8f8;"></div>
<div class="t" style="left:1352.4px;top:619.99px;font-size:16.8px;line-height:16.8px;color:#a9a9a9;font-style:italic;letter-spacing:-0.121px;">Выберите дату</div>
<svg style="left:1490.5px;top:621px" width="11" height="11" viewBox="0 0 11 11"><rect x="0" y="0" width="2.6" height="2.6" fill="#555"/><rect x="0" y="4" width="2.6" height="2.6" fill="#555"/><rect x="0" y="8" width="2.6" height="2.6" fill="#555"/><rect x="4" y="0" width="2.6" height="2.6" fill="#555"/><rect x="4" y="4" width="2.6" height="2.6" fill="#555"/><rect x="4" y="8" width="2.6" height="2.6" fill="#555"/><rect x="8" y="0" width="2.6" height="2.6" fill="#555"/><rect x="8" y="4" width="2.6" height="2.6" fill="#555"/><rect x="8" y="8" width="2.6" height="2.6" fill="#555"/></svg>
<div class="t" style="left:1514.5px;top:619.19px;font-size:16.8px;line-height:16.8px;color:#1a1a1a;">доп. часы:</div>
<div class="dd" style="left:1612.3px;top:612.7px;width:157.20000000000005px;height:27.699999999999932px;"></div>
<svg style="left:1754px;top:616px" width="11" height="21"><path d="M1 6 L5.5 1 L10 6Z M1 15 L10 15 L5.5 20Z" fill="#c8cad8"/></svg>
<div class="t" style="left:1167.1px;top:648.59px;font-size:16.8px;line-height:16.8px;color:#1a1a1a;letter-spacing:0.309px;">Проведено к/дней:</div>
<div class="t" style="left:1167.1px;top:680.19px;font-size:16.8px;line-height:16.8px;color:#1a1a1a;letter-spacing:0.238px;">Лечащий врач:</div>
<div class="t" style="left:1167.1px;top:715.39px;font-size:16.8px;line-height:16.8px;color:#1a1a1a;">Медсестра:</div>
<div class="t" style="left:1167.1px;top:750.89px;font-size:16.8px;line-height:16.8px;color:#1a1a1a;">Помещён в ком</div>
<div class="t" style="left:1167.1px;top:810.39px;font-size:16.8px;line-height:16.8px;color:#1a1a1a;">Отделение:</div>
<div class="sec" style="left:1156px;top:848px;width:1139px;height:92px;"></div>
<svg style="left:1163px;top:856px" width="21" height="21" viewBox="0 0 21 21"><circle cx="10.5" cy="10.5" r="10" fill="#cfcfcf"/><path d="M6 8.5 L15 8.5 L10.5 14Z" fill="#f4f4f4"/></svg>
<div class="t" style="left:1190.9px;top:858.59px;font-size:16.8px;line-height:16.8px;color:#1a1a1a;font-weight:700;">Комментарий</div>
<div class="inp" style="left:1163.4px;top:886.2px;width:1121.6px;height:46.799999999999955px;"></div>
<div class="sec" style="left:1156px;top:944px;width:1139px;height:156px;"></div>
<div class="t" style="left:1165px;top:954.89px;font-size:16.8px;line-height:16.8px;color:#1a1a1a;font-weight:700;">Факторы вредности</div>
<div class="gb" style="left:1167.3px;top:980.2px;width:160px;height:29.2px;"></div>
<div class="t" style="left:1175px;top:986.49px;font-size:16.8px;line-height:16.8px;color:#fff;">Добавить фактор</div>
<div class="sec" style="left:1165.5px;top:1014.5px;width:400px;height:78px;"></div>
<div class="t" style="left:1173.9px;top:1024.19px;font-size:16.8px;line-height:16.8px;color:#1a1a1a;font-weight:700;">Профессия</div>
<div class="dd" style="left:1176.2px;top:1050.3px;width:323.79999999999995px;height:31.299999999999955px;"></div>
<div class="sec" style="left:1156px;top:1104px;width:1139px;height:80px;"></div>
<div class="t" style="left:1165px;top:1114.19px;font-size:16.8px;line-height:16.8px;color:#1a1a1a;font-weight:700;">Метки</div>
<div class="inp" style="left:1167.3px;top:1141.2px;width:1117.7px;height:33.799999999999955px;"></div>
</div>
<div style="left:3px;top:1160px;width:2333px;height:5px;background:#f3f3f3;border-top:1px solid #fff;"></div>
<div style="left:3px;top:1165px;width:2333px;height:27px;background:repeating-linear-gradient(45deg,#454a50 0px,#454a50 1.6px,#393e43 1.8px,#393e43 3.5px);"></div>
<div style="left:3px;top:1165px;width:2333px;height:6px;background:rgba(20,22,25,0.25);"></div>
<div style="left:0px;top:1192px;width:2336px;height:5px;background:#ffffff;"></div>
<div style="left:0;top:0;width:2336px;height:1197px;clip-path:inset(1165px 0px 5px 3px);">
<svg style="left:11px;top:1177px" width="13" height="16" viewBox="0 0 13 16"><circle cx="6.5" cy="5" r="3.5" fill="#e8c0a8"/><path d="M3 3 Q6.5 -1 10 3" fill="#8a7a70"/><path d="M0.5 16 Q1 9 6.5 9 Q12 9 12.5 16Z" fill="#f4f4f4"/><rect x="6" y="9" width="1.4" height="5" fill="#5a90c0"/></svg>
<div class="t" style="left:28.5px;top:1178.59px;font-size:16.8px;line-height:16.8px;color:#ffffff;letter-spacing:0.064px;">admin [Иванова Анна Сергеевна]</div>
</div>
<div style="left:0;top:0;width:2336px;height:1197px;clip-path:inset(0px 0px 5px 0px);">
<div style="left:1287px;top:673px;width:1049px;height:519px;background:#ffffff;"></div>
<div style="left:1287px;top:673px;width:1049px;height:36px;background:#ededed;"></div>
<div style="left:1290px;top:676px;width:819px;height:30px;background:#fff;border:2px solid #3b96f5;"></div>
<svg style="left:2115.5px;top:678.5px" width="25" height="25" viewBox="0 0 25 25"><circle cx="12.5" cy="12.5" r="12" fill="#f2f2f2" stroke="#a8aab8"/><path d="M17 12.5 H8 M12 7.5 L7.5 12.5 L12 17.5" stroke="#111" stroke-width="2.2" fill="none"/></svg>
<div class="dd" style="left:2144.2px;top:676px;width:163.30000000000018px;height:29.5px;"></div>
<div class="t" style="left:2153px;top:684.29px;font-size:16.8px;line-height:16.8px;color:#1a1a1a;letter-spacing:-0.400px;">06.03.2023</div>
<svg style="left:2288px;top:683.5px" width="13" height="16" viewBox="0 0 13 16"><rect x="0.75" y="3" width="11.5" height="12" fill="none" stroke="#707070" stroke-width="1.5"/><rect x="0.75" y="3" width="11.5" height="3" fill="#707070"/><rect x="3" y="0" width="1.5" height="4" fill="#707070"/><rect x="8.5" y="0" width="1.5" height="4" fill="#707070"/><path d="M4 8.5 H8.5 L6 13.5" stroke="#707070" stroke-width="1.3" fill="none"/></svg>
<svg style="left:2311.0px;top:678.5px" width="25" height="25" viewBox="0 0 25 25"><circle cx="12.5" cy="12.5" r="12" fill="#f2f2f2" stroke="#a8aab8"/><path d="M8 12.5 H17 M13 7.5 L17.5 12.5 L13 17.5" stroke="#111" stroke-width="2.2" fill="none"/></svg>
<div style="left:1287px;top:709px;width:1030px;height:483px;background:#fff;border-left:1px solid #cfd0de;border-top:1px solid #cfd0de;"></div>
<div style="left:1288px;top:710px;width:1027px;height:36px;background:#f5f5f5;border-bottom:1.5px solid #d3d4e0;"></div>
<div style="left:1530px;top:710px;width:1.2px;height:482px;background:#d3d4e2;"></div>
<div style="left:1667px;top:710px;width:1.2px;height:482px;background:#d3d4e2;"></div>
<div class="t" style="left:1293.8px;top:720.39px;font-size:16.8px;line-height:16.8px;color:#1a1a1a;font-weight:700;">ФИО</div>
<div class="t" style="left:1536.5px;top:720.39px;font-size:16.8px;line-height:16.8px;color:#1a1a1a;font-weight:700;letter-spacing:0.031px;">Загруженность</div>
<div class="t" style="left:1672.7px;top:720.39px;font-size:16.8px;line-height:16.8px;color:#1a1a1a;font-weight:700;letter-spacing:0.080px;">Ближайшая раб. смена</div>
<div class="t" style="left:1878.3px;top:720.39px;font-size:16.8px;line-height:16.8px;color:#1a1a1a;font-weight:700;letter-spacing:0.072px;">Доступное время диспетчеризации</div>
<div style="left:1288px;top:987.5px;width:1027px;height:1.5px;background:#d9dae6;"></div>
<div style="left:1288px;top:1028px;width:1027px;height:1.5px;background:#d9dae6;"></div>
<div style="left:2314px;top:710px;width:1.5px;height:482px;background:#d5d6e3;"></div>
<div style="left:1290px;top:1030px;width:1025px;height:162px;background:#f9e36d;border-top:1px solid #f7cf50;border-left:1.5px solid #f0c040;"></div>
<div style="left:1291.5px;top:1031.5px;width:1023px;height:1.2px;background:#fbeeaa;"></div>
<div style="left:1530px;top:1030px;width:1.2px;height:162px;background:#d8d5c8;"></div>
<div style="left:1667px;top:1030px;width:1.2px;height:162px;background:#d8d5c8;"></div>
<div class="t" style="left:1294px;top:859.89px;font-size:16.8px;line-height:16.8px;color:#1a1a1a;">Иванова Анна Сергеевна</div>
<div class="t" style="left:1536.8px;top:859.89px;font-size:16.8px;line-height:16.8px;color:#1a1a1a;">1 (2%)</div>
<div class="t" style="left:1673.4px;top:859.89px;font-size:16.8px;line-height:16.8px;color:#1a1a1a;letter-spacing:-0.214px;">06.03 08:00 - 17:00</div>
<div class="t" style="left:1294px;top:1000.99px;font-size:16.8px;line-height:16.8px;color:#1a1a1a;">Кузнецова Елена Николаевна</div>
<div class="t" style="left:1536.8px;top:1000.99px;font-size:16.8px;line-height:16.8px;color:#1a1a1a;">1</div>
<div class="t" style="left:1673.4px;top:1000.99px;font-size:16.8px;line-height:16.8px;color:#1a1a1a;letter-spacing:-0.214px;">06.03 08:00 - 17:00</div>
<div class="t" style="left:1294px;top:1141.69px;font-size:16.8px;line-height:16.8px;color:#1a1a1a;">Лебедева Ольга Николаевна</div>
<div class="t" style="left:1536.8px;top:1141.69px;font-size:16.8px;line-height:16.8px;color:#1a1a1a;">0 (0%)</div>
<div class="t" style="left:1673.4px;top:1141.69px;font-size:16.8px;line-height:16.8px;color:#1a1a1a;letter-spacing:-0.214px;">06.03 08:00 - 17:00</div>
<div class="t" style="left:1885px;top:754.99px;font-size:16.8px;line-height:16.8px;color:#1a1a1a;letter-spacing:0.225px;">2 - Консультации и ИИ</div>
<div class="tbtn" style="left:1895px;top:777.1px;width:61.6px;height:29.199999999999932px;"></div>
<div class="t" style="left:1906px;top:784.39px;font-size:16.8px;line-height:16.8px;color:#1a1a1a;letter-spacing:-0.300px;">08:00</div>
<div class="tbtn" style="left:1965px;top:777.1px;width:61.6px;height:29.199999999999932px;"></div>
<div class="t" style="left:1976px;top:784.39px;font-size:16.8px;line-height:16.8px;color:#1a1a1a;letter-spacing:-0.300px;">09:00</div>
<div class="tbtn" style="left:2034.3px;top:777.1px;width:61.6px;height:29.199999999999932px;"></div>
<div class="t" style="left:2045.3px;top:784.39px;font-size:16.8px;line-height:16.8px;color:#1a1a1a;letter-spacing:-0.300px;">10:00</div>
<div class="tbtn" style="left:2104px;top:777.1px;width:61.6px;height:29.199999999999932px;"></div>
<div class="t" style="left:2115px;top:784.39px;font-size:16.8px;line-height:16.8px;color:#1a1a1a;letter-spacing:-0.050px;">11:00</div>
<div class="tbtn" style="left:2173.1px;top:777.1px;width:61.6px;height:29.199999999999932px;"></div>
<div class="t" style="left:2184.1px;top:784.39px;font-size:16.8px;line-height:16.8px;color:#1a1a1a;letter-spacing:-0.300px;">12:00</div>
<div class="tbtn" style="left:1895px;top:814.7px;width:61.6px;height:30.09999999999991px;"></div>
<div class="t" style="left:1906px;top:821.99px;font-size:16.8px;line-height:16.8px;color:#1a1a1a;letter-spacing:-0.300px;">14:00</div>
<div class="tbtn" style="left:1965px;top:814.7px;width:61.6px;height:30.09999999999991px;"></div>
<div class="t" style="left:1976px;top:821.99px;font-size:16.8px;line-height:16.8px;color:#1a1a1a;letter-spacing:-0.300px;">15:00</div>
<div class="tbtn" style="left:2034.3px;top:814.7px;width:61.6px;height:30.09999999999991px;"></div>
<div class="t" style="left:2045.3px;top:821.99px;font-size:16.8px;line-height:16.8px;color:#1a1a1a;letter-spacing:-0.300px;">16:00</div>
<div class="t" style="left:1885px;top:852.39px;font-size:16.8px;line-height:16.8px;color:#1a1a1a;letter-spacing:0.076px;">7 - Кабинет ЛВ</div>
<div class="tbtn" style="left:1895px;top:874.3px;width:61.6px;height:28.90000000000009px;"></div>
<div class="t" style="left:1906px;top:881.59px;font-size:16.8px;line-height:16.8px;color:#1a1a1a;letter-spacing:-0.050px;">11:20</div>
<div class="tbtn" style="left:1965px;top:874.3px;width:61.6px;height:28.90000000000009px;"></div>
<div class="t" style="left:1976px;top:881.59px;font-size:16.8px;line-height:16.8px;color:#1a1a1a;letter-spacing:-0.050px;">11:40</div>
<div class="tbtn" style="left:2034.3px;top:874.3px;width:61.6px;height:28.90000000000009px;"></div>
<div class="t" style="left:2045.3px;top:881.59px;font-size:16.8px;line-height:16.8px;color:#1a1a1a;letter-spacing:-0.300px;">12:00</div>
<div class="tbtn" style="left:2104px;top:874.3px;width:61.6px;height:28.90000000000009px;"></div>
<div class="t" style="left:2115px;top:881.59px;font-size:16.8px;line-height:16.8px;color:#1a1a1a;letter-spacing:-0.300px;">12:20</div>
<div class="tbtn" style="left:2173.1px;top:874.3px;width:61.6px;height:28.90000000000009px;"></div>
<div class="t" style="left:2184.1px;top:881.59px;font-size:16.8px;line-height:16.8px;color:#1a1a1a;letter-spacing:-0.300px;">12:40</div>
<div class="tbtn" style="left:1895px;top:912.2px;width:61.6px;height:29.199999999999932px;"></div>
<div class="t" style="left:1906px;top:919.49px;font-size:16.8px;line-height:16.8px;color:#1a1a1a;letter-spacing:-0.300px;">14:00</div>
<div class="tbtn" style="left:1965px;top:912.2px;width:61.6px;height:29.199999999999932px;"></div>
<div class="t" style="left:1976px;top:919.49px;font-size:16.8px;line-height:16.8px;color:#1a1a1a;letter-spacing:-0.300px;">14:20</div>
<div class="tbtn" style="left:2034.3px;top:912.2px;width:61.6px;height:29.199999999999932px;"></div>
<div class="t" style="left:2045.3px;top:919.49px;font-size:16.8px;line-height:16.8px;color:#1a1a1a;letter-spacing:-0.300px;">14:40</div>
<div class="tbtn" style="left:2104px;top:912.2px;width:61.6px;height:29.199999999999932px;"></div>
<div class="t" style="left:2115px;top:919.49px;font-size:16.8px;line-height:16.8px;color:#1a1a1a;letter-spacing:-0.300px;">15:00</div>
<div class="tbtn" style="left:2173.1px;top:912.2px;width:61.6px;height:29.199999999999932px;"></div>
<div class="t" style="left:2184.1px;top:919.49px;font-size:16.8px;line-height:16.8px;color:#1a1a1a;letter-spacing:-0.300px;">15:20</div>
<div class="tbtn" style="left:1895px;top:950.4px;width:61.6px;height:29.200000000000045px;"></div>
<div class="t" style="left:1906px;top:957.69px;font-size:16.8px;line-height:16.8px;color:#1a1a1a;letter-spacing:-0.300px;">15:40</div>
<div class="tbtn" style="left:1965px;top:950.4px;width:61.6px;height:29.200000000000045px;"></div>
<div class="t" style="left:1976px;top:957.69px;font-size:16.8px;line-height:16.8px;color:#1a1a1a;letter-spacing:-0.300px;">16:00</div>
<div class="tbtn" style="left:2034.3px;top:950.4px;width:61.6px;height:29.200000000000045px;"></div>
<div class="t" style="left:2045.3px;top:957.69px;font-size:16.8px;line-height:16.8px;color:#1a1a1a;letter-spacing:-0.300px;">16:20</div>
<div class="tbtn" style="left:2104px;top:950.4px;width:61.6px;height:29.200000000000045px;"></div>
<div class="t" style="left:2115px;top:957.69px;font-size:16.8px;line-height:16.8px;color:#1a1a1a;letter-spacing:-0.300px;">16:40</div>
<div class="t" style="left:1885px;top:1037.39px;font-size:16.8px;line-height:16.8px;color:#1a1a1a;letter-spacing:0.225px;">2 - Консультации и ИИ</div>
<div class="tbtn" style="left:1895px;top:1059.9px;width:61.6px;height:28.299999999999955px;"></div>
<div class="t" style="left:1906px;top:1067.19px;font-size:16.8px;line-height:16.8px;color:#1a1a1a;letter-spacing:-0.300px;">08:00</div>
<div class="tbtn" style="left:1965px;top:1059.9px;width:61.6px;height:28.299999999999955px;"></div>
<div class="t" style="left:1976px;top:1067.19px;font-size:16.8px;line-height:16.8px;color:#1a1a1a;letter-spacing:-0.300px;">09:00</div>
<div class="tbtn" style="left:2034.3px;top:1059.9px;width:61.6px;height:28.299999999999955px;"></div>
<div class="t" style="left:2045.3px;top:1067.19px;font-size:16.8px;line-height:16.8px;color:#1a1a1a;letter-spacing:-0.300px;">10:00</div>
<div class="tbtn" style="left:2104px;top:1059.9px;width:61.6px;height:28.299999999999955px;"></div>
<div class="t" style="left:2115px;top:1067.19px;font-size:16.8px;line-height:16.8px;color:#1a1a1a;letter-spacing:-0.050px;">11:00</div>
<div class="tbtn" style="left:2173.1px;top:1059.9px;width:61.6px;height:28.299999999999955px;"></div>
<div class="t" style="left:2184.1px;top:1067.19px;font-size:16.8px;line-height:16.8px;color:#1a1a1a;letter-spacing:-0.300px;">12:00</div>
<div class="tbtn" style="left:1895px;top:1097.2px;width:61.6px;height:29.200000000000045px;"></div>
<div class="t" style="left:1906px;top:1104.49px;font-size:16.8px;line-height:16.8px;color:#1a1a1a;letter-spacing:-0.300px;">14:00</div>
<div class="tbtn" style="left:1965px;top:1097.2px;width:61.6px;height:29.200000000000045px;"></div>
<div class="t" style="left:1976px;top:1104.49px;font-size:16.8px;line-height:16.8px;color:#1a1a1a;letter-spacing:-0.300px;">15:00</div>
<div class="tbtn" style="left:2034.3px;top:1097.2px;width:61.6px;height:29.200000000000045px;"></div>
<div class="t" style="left:2045.3px;top:1104.49px;font-size:16.8px;line-height:16.8px;color:#1a1a1a;letter-spacing:-0.300px;">16:00</div>
<div class="t" style="left:1885px;top:1132.89px;font-size:16.8px;line-height:16.8px;color:#1a1a1a;letter-spacing:0.076px;">7 - Кабинет ЛВ</div>
<div class="tbtn" style="left:1895px;top:1155.6px;width:61.6px;height:29.90000000000009px;"></div>
<div class="t" style="left:1906px;top:1162.89px;font-size:16.8px;line-height:16.8px;color:#1a1a1a;letter-spacing:-0.050px;">11:20</div>
<div class="tbtn" style="left:1965px;top:1155.6px;width:61.6px;height:29.90000000000009px;"></div>
<div class="t" style="left:1976px;top:1162.89px;font-size:16.8px;line-height:16.8px;color:#1a1a1a;letter-spacing:-0.050px;">11:40</div>
<div class="tbtn" style="left:2034.3px;top:1155.6px;width:61.6px;height:29.90000000000009px;"></div>
<div class="t" style="left:2045.3px;top:1162.89px;font-size:16.8px;line-height:16.8px;color:#1a1a1a;letter-spacing:-0.300px;">12:00</div>
<div class="tbtn" style="left:2104px;top:1155.6px;width:61.6px;height:29.90000000000009px;"></div>
<div class="t" style="left:2115px;top:1162.89px;font-size:16.8px;line-height:16.8px;color:#1a1a1a;letter-spacing:-0.300px;">12:20</div>
<div class="tbtn" style="left:2173.1px;top:1155.6px;width:61.6px;height:29.90000000000009px;"></div>
<div class="t" style="left:2184.1px;top:1162.89px;font-size:16.8px;line-height:16.8px;color:#1a1a1a;letter-spacing:-0.300px;">12:40</div>
<div style="left:2317px;top:709px;width:19px;height:483px;background:#f5f5f5;"></div>
<svg style="left:2322px;top:717px" width="12" height="8"><path d="M0 7 L6 0 L12 7Z" fill="#707070"/></svg>
<div style="left:2322px;top:732px;width:11px;height:354px;background:#c9cad9;"></div>
<svg style="left:2322px;top:1183px" width="12" height="7"><path d="M0 0 L12 0 L6 6.5Z" fill="#707070"/></svg>
</div>
<div style="left:1873px;top:708px;width:447px;height:489px;border:3.2px solid #e2352d;border-radius:6px;"></div>
<div style="left:1876px;top:1191.5px;width:440px;height:2px;background:#fff;"></div>
<svg style="left:0;top:0" width="2336" height="1197" viewBox="0 0 2336 1197"><g transform="translate(1.6,2.2)"><path d="M1716.8 683 L1725.4 672.2 L1728.2 677.6 L2034.8 614.2 L2035.6 616.9 L1729.4 683.6 L1729.4 690.4 Z" fill="#8c8c8c" opacity="0.5"/></g><path d="M1716.8 683 L1725.4 672.2 L1728.2 677.6 L2034.8 614.2 L2035.6 616.9 L1729.4 683.6 L1729.4 690.4 Z" fill="#e23a30" stroke="#e23a30" stroke-width="0.6" stroke-linejoin="round"/></svg>
</body></html>
